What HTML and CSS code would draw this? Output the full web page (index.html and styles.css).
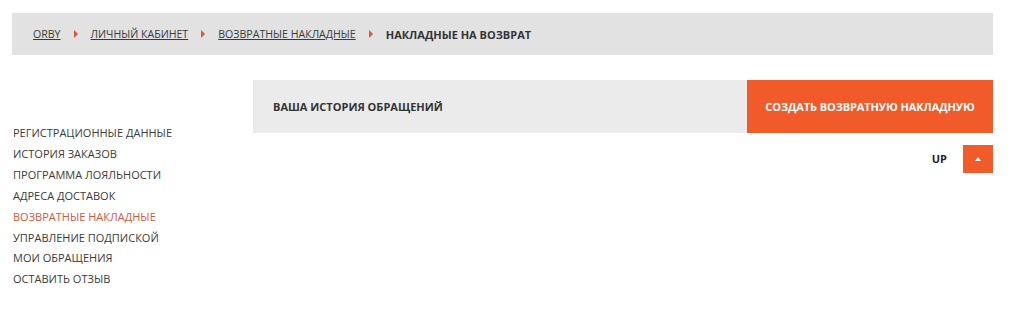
FILE: index.html
```html
<!DOCTYPE html>
<html lang="ru">
<head>
<meta charset="utf-8">
<title>Накладные на возврат</title>
<link rel="stylesheet" href="styles.css">
</head>
<body>
<div class="page">
  <nav class="crumbs">
    <a href="#" class="crumb-link">ORBY</a>
    <span class="sep"></span>
    <a href="#" class="crumb-link">ЛИЧНЫЙ КАБИНЕТ</a>
    <span class="sep"></span>
    <a href="#" class="crumb-link">ВОЗВРАТНЫЕ НАКЛАДНЫЕ</a>
    <span class="sep"></span>
    <span class="crumb-current">НАКЛАДНЫЕ НА ВОЗВРАТ</span>
  </nav>
  <div class="main">
    <aside class="sidebar">
      <a href="#" class="side-link">РЕГИСТРАЦИОННЫЕ ДАННЫЕ</a>
      <a href="#" class="side-link">ИСТОРИЯ ЗАКАЗОВ</a>
      <a href="#" class="side-link">ПРОГРАММА ЛОЯЛЬНОСТИ</a>
      <a href="#" class="side-link">АДРЕСА ДОСТАВОК</a>
      <a href="#" class="side-link active">ВОЗВРАТНЫЕ НАКЛАДНЫЕ</a>
      <a href="#" class="side-link">УПРАВЛЕНИЕ ПОДПИСКОЙ</a>
      <a href="#" class="side-link">МОИ ОБРАЩЕНИЯ</a>
      <a href="#" class="side-link">ОСТАВИТЬ ОТЗЫВ</a>
    </aside>
    <section class="content">
      <div class="panel">
        <div class="panel-title">ВАША ИСТОРИЯ ОБРАЩЕНИЙ</div>
        <a href="#" class="create-btn">СОЗДАТЬ ВОЗВРАТНУЮ НАКЛАДНУЮ</a>
      </div>
      <div class="up-row">
        <span class="up-label">UP</span>
        <a href="#" class="up-btn"><span class="up-arrow"></span></a>
      </div>
    </section>
  </div>
</div>
</body>
</html>
```

FILE: styles.css
```css
* { box-sizing: border-box; }
html, body { margin: 0; padding: 0; background: #fff; }
body {
  font-family: "Open Sans", "Noto Sans", sans-serif;
  font-size: 11px;
  color: #333;
}
a { text-decoration: none; color: inherit; }

.page {
  padding: 13px 16px 0 12px;
}

.crumbs {
  display: flex;
  align-items: center;
  height: 42px;
  background: #e2e2e2;
  padding-left: 21px;
}
.crumb-link {
  text-decoration: underline;
  color: #3a3a3a;
  font-size: 10.6px;
  line-height: 1;
}
.sep {
  width: 0;
  height: 0;
  border-top: 4px solid transparent;
  border-bottom: 4px solid transparent;
  border-left: 4px solid #d9573a;
  margin: 0 13px 0 13px;
}
.crumb-current {
  font-weight: 700;
  color: #333;
}

.main {
  display: flex;
  margin-top: 25px;
}
.sidebar {
  width: 241px;
  display: flex;
  flex-direction: column;
  padding-top: 43px;
  padding-left: 1px;
}
.side-link {
  line-height: 20.9px;
  color: #3a3a3a;
}
.side-link.active { color: #d5573c; }

.content { flex: 1; }
.panel {
  display: flex;
  height: 53px;
  background: #ebebeb;
}
.panel-title {
  flex: 1;
  display: flex;
  align-items: center;
  padding-left: 20px;
  font-weight: 700;
  color: #333;
}
.create-btn {
  width: 246px;
  display: flex;
  align-items: center;
  justify-content: center;
  background: #f15a29;
  color: #fff;
  font-weight: 700;
  letter-spacing: -0.1px;
}

.up-row {
  display: flex;
  justify-content: flex-end;
  align-items: center;
  margin-top: 12px;
}
.up-label {
  font-weight: 700;
  color: #222;
  margin-right: 16px;
  position: relative;
  top: -1px;
}
.up-btn {
  width: 30px;
  height: 28px;
  background: #f15a29;
  display: flex;
  align-items: center;
  justify-content: center;
}
.up-arrow {
  width: 0;
  height: 0;
  border-left: 3.5px solid transparent;
  border-right: 3.5px solid transparent;
  border-bottom: 4px solid #fff;
}
```
